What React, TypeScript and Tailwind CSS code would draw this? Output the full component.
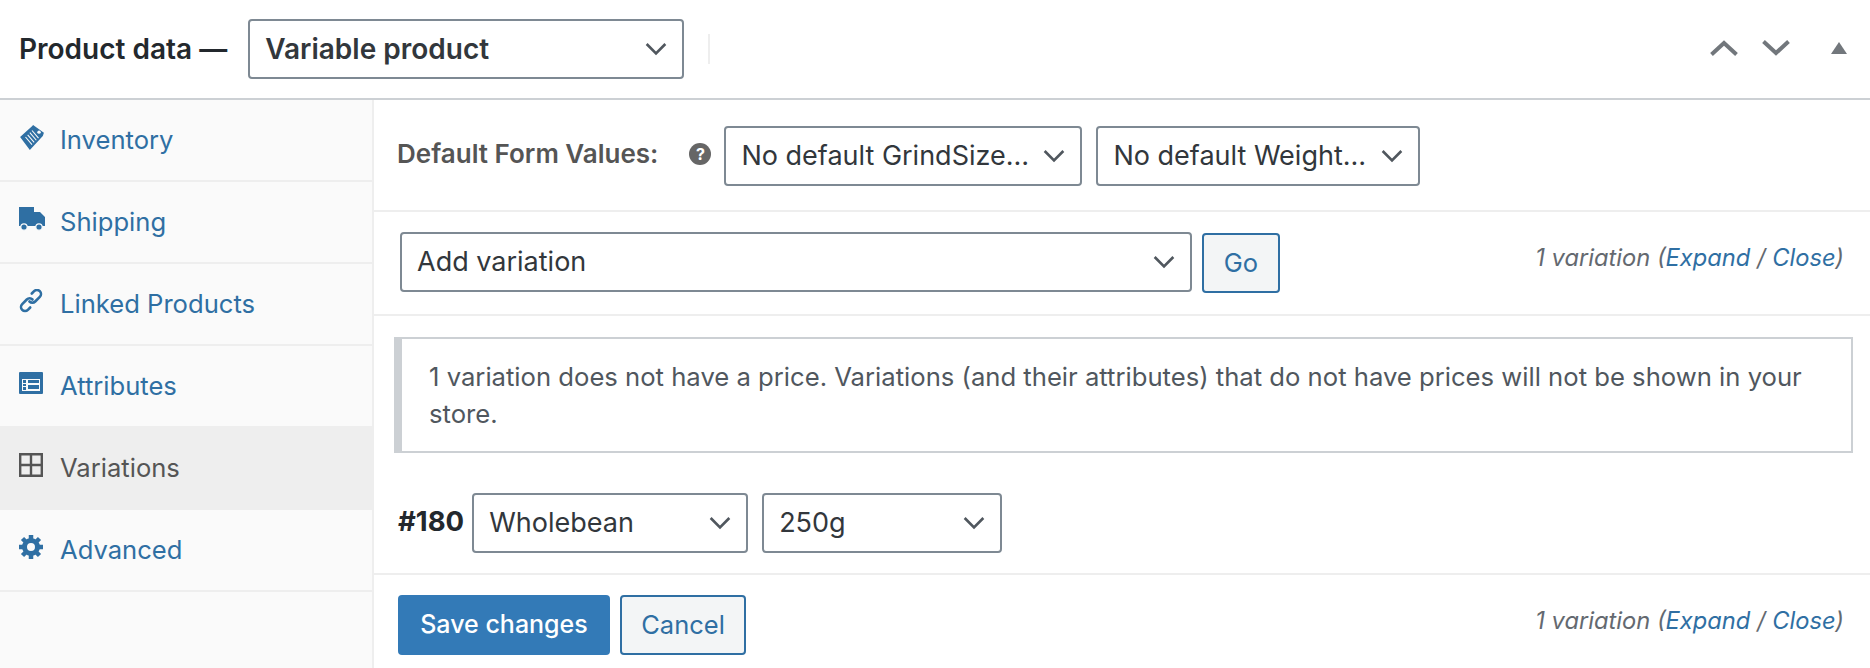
import React from 'react';

const Chevron = ({ className = 'h-[22px] w-[22px] text-[#50575e]' }: { className?: string }) => (
  <svg viewBox="0 0 20 20" className={className} fill="none" stroke="currentColor" strokeWidth="2.4">
    <path d="M1.500 5.500L10 14l8.500-8.500" />
  </svg>
);

const InventoryIcon = () => (
  <svg viewBox="0 0 24 24" className="h-[26px] w-[26px]" fill="#2f6fa3">
    <path d="M13 1l10 7-1 3-12 13L1 12 12 2z" />
    <path d="M6 12l6 7M8 10l6 7M10 8l6 7M12 6l6 7" stroke="#fafafa" strokeWidth="1" fill="none" />
    <circle cx="18.5" cy="7.5" r="1.6" fill="#fafafa" />
  </svg>
);

const TruckIcon = () => (
  <svg viewBox="0 0 26 24" className="h-[24px] w-[26px]" fill="#2f6fa3">
    <path d="M0 0h15v5h6l5 5v9H0z" />
    <circle cx="5" cy="20" r="3.2" stroke="#fafafa" strokeWidth="1.2" />
    <circle cx="20" cy="20" r="3.2" stroke="#fafafa" strokeWidth="1.2" />
  </svg>
);

const LinkIcon = () => (
  <svg viewBox="0 0 24 24" className="h-[24px] w-[24px]" fill="none" stroke="#2f6fa3" strokeWidth="2.6" strokeLinecap="round">
    <path d="M10.500 12.500a4 4 0 0 0 5.700 0l4.600-4.600a4 4 0 0 0-5.700-5.700l-2.300 2.300" />
    <path d="M13.500 10.500a4 4 0 0 0-5.700 0l-4.600 4.600a4 4 0 0 0 5.700 5.700l2.300-2.300" />
  </svg>
);

const AttributesIcon = () => (
  <svg viewBox="0 0 24 22" className="h-[22px] w-[24px]" fill="#2f6fa3">
    <path fillRule="evenodd" d="M1 0h22a1 1 0 0 1 1 1v20a1 1 0 0 1-1 1H1a1 1 0 0 1-1-1V1a1 1 0 0 1 1-1zm2 7v12h18V7z" />
    <path d="M4 8h3v3H4zM9 8h11v3H9zM4 12h3v2H4zM9 13h11v4H9zM4 15h3v3H4z" />
  </svg>
);

const GridIcon = () => (
  <svg viewBox="0 0 24 24" className="h-[24px] w-[24px]" fill="none" stroke="#555555" strokeWidth="2.4">
    <path d="M1.200 1.200h21.600v21.600H1.200zM12 1.200v21.600M1.200 12h21.600" />
  </svg>
);

const GearIcon = () => (
  <svg viewBox="0 0 24 24" className="h-[24px] w-[24px]">
    <circle cx="12" cy="12" r="6.500" fill="none" stroke="#2f6fa3" strokeWidth="5" />
    <g stroke="#2f6fa3" strokeWidth="4.500">
      <path d="M12 0v5M12 19v5M0 12h5M19 12h5M3.500 3.500l3.500 3.500M17 17l3.500 3.500M20.500 3.500L17 7M7 17l-3.500 3.500" />
    </g>
  </svg>
);

const tabs = [
  { label: 'Inventory', icon: <InventoryIcon /> },
  { label: 'Shipping', icon: <TruckIcon /> },
  { label: 'Linked Products', icon: <LinkIcon /> },
  { label: 'Attributes', icon: <AttributesIcon /> },
  { label: 'Variations', icon: <GridIcon />, active: true },
  { label: 'Advanced', icon: <GearIcon /> },
];

const VariationCount = () => (
  <span className="text-[23.7px] italic text-[#646970]">
    1 variation (<span className="text-[#2f6fa3]">Expand</span> / <span className="text-[#2f6fa3]">Close</span>)
  </span>
);

const Select = ({ label, className }: { label: string; className: string }) => (
  <div
    className={`flex h-[60px] items-center justify-between rounded-[4px] border-2 border-[#7e8993] bg-white pl-[15px] pr-[15px] text-[27px] text-[#32373c] ${className}`}
  >
    <span className="whitespace-nowrap">{label}</span>
    <Chevron />
  </div>
);

export default function App() {
  return (
    <div className="flex h-[668px] w-[1870px] flex-col overflow-hidden bg-white font-['Inter',sans-serif]">
      {/* Header */}
      <div className="flex h-[100px] shrink-0 items-center border-b-2 border-[#ccd0d4] pl-[19px] pr-[23px]">
        <span className="whitespace-nowrap text-[28px] font-semibold text-[#23282d]">Product data —</span>
        <Select label="Variable product" className="ml-[21px] mb-[1px] w-[436px] !text-[28px] font-semibold" />
        <div className="ml-[24px] h-[30px] w-[2px] bg-[#eeeeee]" />
        <div className="ml-auto mb-[2px] flex items-center text-[#72777c]">
          <svg viewBox="0 0 28 16" className="h-[16px] w-[28px]" fill="none" stroke="currentColor" strokeWidth="4">
            <path d="M1.500 14.500L14 3l12.500 11.500" />
          </svg>
          <svg viewBox="0 0 28 16" className="ml-[24px] h-[16px] w-[28px]" fill="none" stroke="currentColor" strokeWidth="4">
            <path d="M1.500 1.500L14 13 26.500 1.500" />
          </svg>
          <svg viewBox="0 0 16 12" className="ml-[41px] h-[12px] w-[16px]" fill="currentColor">
            <path d="M8 0l8 12H0z" />
          </svg>
        </div>
      </div>

      <div className="flex min-h-0 flex-1">
        {/* Tabs */}
        <div className="w-[374px] shrink-0 border-r-2 border-[#eeeeee] bg-[#fafafa]">
          {tabs.map((tab) => (
            <div
              key={tab.label}
              className={`flex h-[82px] items-center border-b-2 border-[#eeeeee] pl-[19px] pt-[1px] text-[25.6px] ${
                tab.active ? 'bg-[#eeeeee] text-[#555555]' : 'text-[#2f6fa3]'
              }`}
            >
              <span className="mb-[7px] flex w-[41px] shrink-0 items-center">{tab.icon}</span>
              {tab.label}
            </div>
          ))}
        </div>

        {/* Panel */}
        <div className="flex min-w-0 flex-1 flex-col">
          <div className="flex h-[112px] items-center border-b-2 border-[#eeeeee] pl-[23px] pt-[2px]">
            <span className="mb-[5px] whitespace-nowrap text-[26px] font-semibold text-[#555555]">Default Form Values:</span>
            <span className="ml-[31px] mb-[4px] flex h-[22px] w-[22px] items-center justify-center rounded-full bg-[#666666] text-[16px] font-bold text-white">
              ?
            </span>
            <Select label="No default GrindSize…" className="ml-[13px] w-[358px]" />
            <Select label="No default Weight…" className="ml-[14px] w-[324px]" />
          </div>

          <div className="flex h-[104px] items-center border-b-2 border-[#eeeeee] pl-[26px] pr-[26px]">
            <Select label="Add variation" className="mb-[2px] w-[792px]" />
            <button className="ml-[10px] flex h-[60px] w-[78px] items-center justify-center rounded-[4px] border-2 border-[#2f6fa3] bg-[#f3f5f6] text-[25.5px] text-[#2f6fa3]">
              Go
            </button>
            <span className="ml-auto mb-[10px]">
              <VariationCount />
            </span>
          </div>

          <div className="ml-[20px] mr-[17px] mt-[21px] border-2 border-l-[8px] border-[#ccd0d4] py-[19px] pl-[27px] pr-[30px] text-[25.65px] leading-[37px] text-[#50575e]">
            1 variation does not have a price. Variations (and their attributes) that do not have prices will not be shown in your store.
          </div>

          <div className="flex h-[122px] items-start border-b-2 border-[#eeeeee] pl-[24px] pt-[40px]">
            <span className="mr-[8px] mt-[8px] text-[27.5px] font-bold text-[#23282d]">#180</span>
            <Select label="Wholebean" className="w-[276px]" />
            <Select label="250g" className="ml-[14px] w-[240px]" />
          </div>

          <div className="flex flex-1 items-start pl-[24px] pr-[26px] pt-[20px]">
            <button className="flex h-[60px] w-[212px] items-center justify-center rounded-[4px] bg-[#337ab7] text-[25px] font-medium text-white">
              Save changes
            </button>
            <button className="ml-[10px] flex h-[60px] w-[126px] items-center justify-center rounded-[4px] border-2 border-[#2f6fa3] bg-[#f3f5f6] text-[25.5px] text-[#2f6fa3]">
              Cancel
            </button>
            <span className="ml-auto mt-[8px]">
              <VariationCount />
            </span>
          </div>
        </div>
      </div>
    </div>
  );
}
